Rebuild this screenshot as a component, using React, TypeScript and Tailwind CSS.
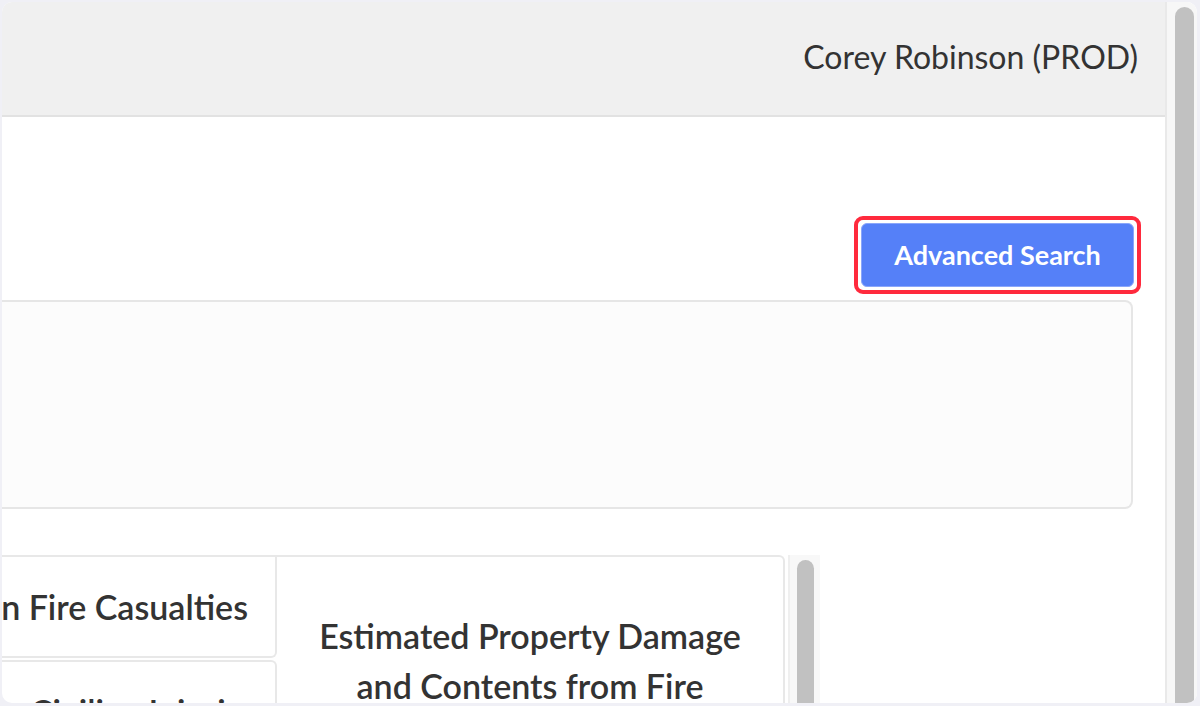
export default function App() {
  return (
    <div className="h-[706px] w-[1200px] overflow-hidden bg-[#f0f0f6] pb-[3px] pl-[2px] pr-[3px] pt-[2px] font-['Lato',sans-serif] text-[#333]">
      <div className="flex h-full overflow-hidden rounded-[10px] bg-white">
        {/* Page content */}
        <div className="flex min-w-0 flex-1 flex-col">
          <header className="flex h-[115px] shrink-0 items-center justify-end border-b-2 border-[#e2e2e2] bg-[#f0f0f0] pb-[4px] pr-[27px]">
            <span className="text-[32px] leading-none">Corey Robinson (PROD)</span>
          </header>

          <div className="mt-[99px] flex shrink-0 justify-end pr-[24px]">
            <div className="rounded-[9px] border-4 border-[#ff2a3d] p-[3px]">
              <button className="flex h-[64px] w-[273px] items-center justify-center rounded-[6px] border border-[#8aa6fa] bg-[#5580f8] text-[27px] font-bold text-white">
                Advanced Search
              </button>
            </div>
          </div>

          {/* Search results panel */}
          <div className="mr-[32px] mt-[6px] h-[209px] shrink-0 rounded-r-[8px] border-y-2 border-r-2 border-[#e6e6e6] bg-[#fcfcfc]" />

          {/* Table */}
          <div className="mt-[46px] flex shrink-0">
            <div className="flex w-[783px] rounded-tr-[6px] border-r-2 border-t-2 border-[#e8e8e8]">
              <div className="flex w-[275px] shrink-0 flex-col">
                <div className="flex h-[101px] items-center justify-end overflow-hidden whitespace-nowrap rounded-br-[6px] border-b-2 border-r-2 border-[#e8e8e8] pr-[27px] text-[34px] font-semibold">
                  Civilian Fire Casualties
                </div>
                <div className="mt-[2px] h-[100px] overflow-hidden whitespace-nowrap rounded-tr-[6px] border-r-2 border-t-2 border-[#e8e8e8] pl-[28px] pt-[25px] text-[34px] font-semibold leading-[50px]">
                  Civilian Injuries
                </div>
              </div>
              <div className="flex-1 pt-[54px] text-center text-[34px] font-semibold leading-[50px]">
                Estimated Property Damage
                <br />
                and Contents from Fire
              </div>
            </div>
            <div className="ml-[3px] w-[32px] border-l-2 border-[#efefef] bg-[#f8f8f8] pl-[7px] pt-[5px]">
              <div className="h-[200px] w-[17px] rounded-t-full bg-[#c1c1c1]" />
            </div>
          </div>
        </div>

        {/* Page scrollbar */}
        <div className="w-[32px] shrink-0 border-l-2 border-[#e9e9e9] bg-[#f7f7f7] pl-[8px] pt-[5px]">
          <div className="h-full w-[19px] rounded-t-full bg-[#c1c1c1]" />
        </div>
      </div>
    </div>
  );
}
